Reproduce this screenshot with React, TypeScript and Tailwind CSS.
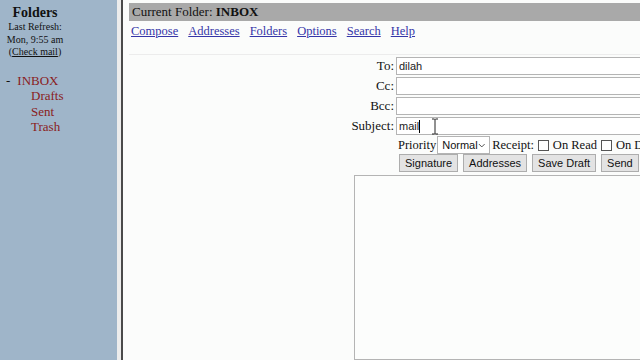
import React from 'react';

const serif = { fontFamily: '"Liberation Serif", "Times New Roman", serif' };

const links = ['Compose', 'Addresses', 'Folders', 'Options', 'Search', 'Help'];
const folders = ['Drafts', 'Sent', 'Trash'];

const Field: React.FC<{ label: string; value?: string; caret?: boolean }> = ({ label, value = '', caret }) => (
  <div className="flex items-center h-[18px]">
    <div className="w-[267px] shrink-0 text-right text-[13px] text-[#111] pr-[2px]">{label}</div>
    <div className="relative flex-1 h-[18px] min-w-[300px] bg-white border border-[#b4b4b4] flex items-center pl-[2px] font-['Liberation_Sans',sans-serif] text-[11px] text-[#222]">
      {value}
      {caret && <span className="inline-block w-[1px] h-[13px] bg-black" />}
      {caret && (
        <svg className="absolute left-[34px] top-[0px]" width="8" height="17" viewBox="0 0 8 17">
          <path d="M1 1h2.5L4 1.5 4.5 1H7M4 1.5v14M1 16h2.5l.5-.5.5.5H7" fill="none" stroke="#222" strokeWidth="1" />
        </svg>
      )}
    </div>
  </div>
);

const Box: React.FC = () => <span className="inline-block shrink-0 w-[11px] h-[11px] border border-[#555] bg-white mx-[4px]" />;

const Btn: React.FC<{ children: React.ReactNode }> = ({ children }) => (
  <button className="h-[18px] px-[5px] shrink-0 bg-[#e3e3e3] border border-[#adadad] font-['Liberation_Sans',sans-serif] text-[11px] text-[#111] leading-none">
    {children}
  </button>
);

export default function App() {
  return (
    <div className="flex w-[640px] h-[360px] overflow-hidden bg-[#fbfcfb]" style={serif}>
      <div className="w-[117px] shrink-0 bg-[#9fb5c9] text-[#111]">
        <div className="w-[70px] text-center pt-[4px]">
          <div className="text-[14px] font-bold leading-[17px]">Folders</div>
          <div className="text-[10px] leading-[12.5px]">Last Refresh:</div>
          <div className="text-[10px] leading-[12.5px]">Mon, 9:55 am</div>
          <div className="text-[10px] leading-[12.5px]">(<span className="underline">Check mail</span>)</div>
        </div>
        <div className="mt-[14px] pl-[6px] text-[13px] leading-[15.5px] text-[#8a1c1c]">
          <div><span className="text-[#111] mr-[7px]">-</span>INBOX</div>
          {folders.map(f => (
            <div key={f} className="pl-[25px]">{f}</div>
          ))}
        </div>
      </div>
      <div className="w-[4px] shrink-0 bg-[#ececec]" />
      <div className="w-[2px] shrink-0 bg-[#4a4a4a]" />
      <div className="flex-1 min-w-0 pt-[3px] pl-[6px] flex flex-col">
        <div className="h-[18px] bg-[#a9a9a9] text-[13px] text-[#111] pl-[3px] leading-[18px]">
          Current Folder: <b>INBOX</b>
        </div>
        <div className="flex gap-[10px] mt-[2px] pl-[2px] text-[12.5px] leading-[16px] text-[#3535a8]">
          {links.map(l => (
            <span key={l} className="underline">{l}</span>
          ))}
        </div>
        <div className="mt-[15px] h-[1px] bg-[#ececec]" />
        <div className="flex flex-col gap-[2px] mt-[2px]">
          <Field label="To:" value="dilah" />
          <Field label="Cc:" />
          <Field label="Bcc:" />
          <Field label="Subject:" value="mail" caret />
        </div>
        <div className="flex items-center h-[18px] mt-[1px] pl-[269px] text-[12.5px] text-[#111] whitespace-nowrap">
          <span>Priority</span>
          <span className="ml-[1px] h-[18px] w-[53px] shrink-0 bg-white border border-[#b4b4b4] flex items-center justify-between pl-[4px] pr-[4px] font-['Liberation_Sans',sans-serif] text-[11px]">
            Normal
            <svg width="8" height="5" viewBox="0 0 8 5"><path d="M1 1l3 3 3-3" fill="none" stroke="#444" strokeWidth="1" /></svg>
          </span>
          <span className="ml-[2px]">Receipt:</span>
          <Box />
          <span>On Read</span>
          <Box />
          <span>On Delivery</span>
        </div>
        <div className="flex gap-[5px] mt-[0px] pl-[270px]">
          <Btn>Signature</Btn>
          <Btn>Addresses</Btn>
          <Btn>Save Draft</Btn>
          <Btn>Send</Btn>
        </div>
        <div className="mt-[3px] ml-[225px] flex-1 min-w-[300px] bg-[#fcfdfc] border border-[#b4b4b4]" />
      </div>
    </div>
  );
}
